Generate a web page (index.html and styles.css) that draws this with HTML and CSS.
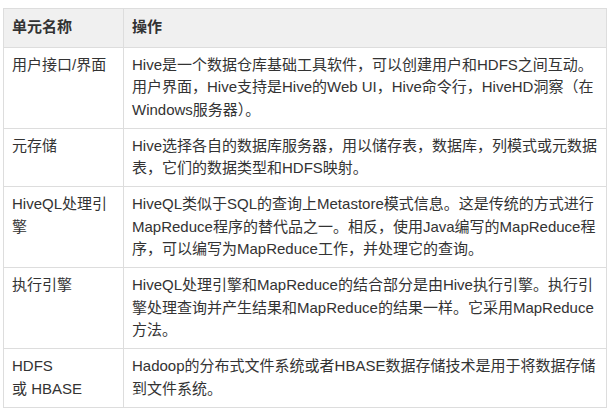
FILE: index.html
```html
<!DOCTYPE html>
<html lang="zh-CN">
<head>
    <meta charset="UTF-8">
    <meta name="viewport" content="width=device-width, initial-scale=1.0">
    <title>Hive 架构单元</title>
    <link rel="stylesheet" href="styles.css">
</head>
<body>

    <table class="unit-table">
        <thead>
            <tr>
                <th class="col-name">单元名称</th>
                <th>操作</th>
            </tr>
        </thead>
        <tbody>
            <tr>
                <td>用户接口/界面</td>
                <td>Hive是一个数据仓库基础工具软件，可以创建用户和HDFS之间互动。用户界面，Hive支持是Hive的Web UI，Hive命令行，HiveHD洞察（在Windows服务器）。</td>
            </tr>
            <tr>
                <td>元存储</td>
                <td>Hive选择各自的数据库服务器，用以储存表，数据库，列模式或元数据表，它们的数据类型和HDFS映射。</td>
            </tr>
            <tr>
                <td>HiveQL处理引擎</td>
                <td>HiveQL类似于SQL的查询上Metastore模式信息。这是传统的方式进行MapReduce程序的替代品之一。相反，使用Java编写的MapReduce程序，可以编写为MapReduce工作，并处理它的查询。</td>
            </tr>
            <tr>
                <td>执行引擎</td>
                <td>HiveQL处理引擎和MapReduce的结合部分是由Hive执行引擎。执行引擎处理查询并产生结果和MapReduce的结果一样。它采用MapReduce方法。</td>
            </tr>
            <tr>
                <td>HDFS<br>或 HBASE</td>
                <td>Hadoop的分布式文件系统或者HBASE数据存储技术是用于将数据存储到文件系统。</td>
            </tr>
        </tbody>
    </table>

</body>
</html>
```

FILE: styles.css
```css
body {
    font-family: "Liberation Sans", "Noto Sans CJK SC", sans-serif;
    margin: 0;
    padding: 8px 8px 0 3px;
    background-color: #fff;
    color: #333;
    font-size: 15px;
    line-height: 22.5px;
}
.unit-table {
    width: 604px;
    border-collapse: collapse;
}
.unit-table th, .unit-table td {
    border: 1px solid #ddd;
    padding: 6px 8px 6.5px;
    text-align: left;
    vertical-align: top;
}
.unit-table th {
    background: #f0f0f0;
    font-weight: bold;
    padding: 7px 8px 8px;
}
.col-name {
    width: 103px;
}
```
